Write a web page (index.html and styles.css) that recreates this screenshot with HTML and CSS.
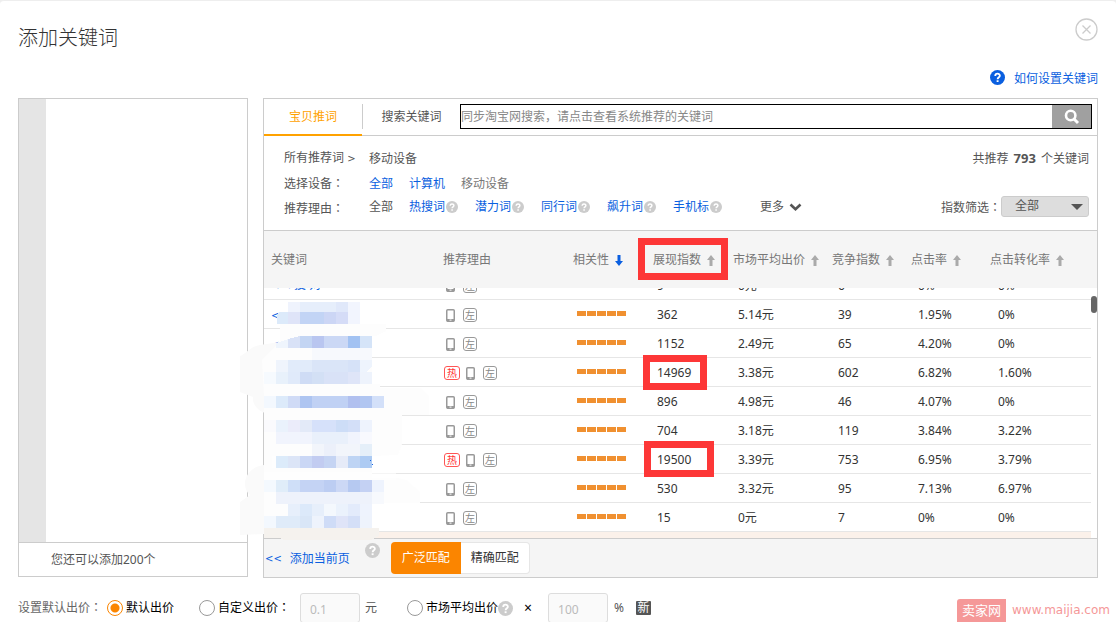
FILE: index.html
```html
<!DOCTYPE html>
<html lang="zh-CN">
<head>
<meta charset="utf-8">
<title>添加关键词</title>
<link rel="stylesheet" href="styles.css">
</head>
<body>
<svg class="defs" width="0" height="0" aria-hidden="true">
  <symbol id="help" viewBox="0 0 14 14"><circle cx="7" cy="7" r="7" fill="currentColor"/><path d="M4.9 5.5C4.9 2.7 9.2 2.8 9.2 5.3C9.2 6.8 7.1 6.8 7.1 8.6" fill="none" stroke="#fff" stroke-width="1.7"/><path d="M6.2 9.6h1.8v1.7H6.2z" fill="#fff"/></symbol>
  <symbol id="up" viewBox="0 0 8 11"><path d="M4 0L8 5H5.5V11H2.5V5H0z" fill="currentColor"/></symbol>
  <symbol id="down" viewBox="0 0 8 11"><path d="M4 11L8 6H5.5V0H2.5V6H0z" fill="currentColor"/></symbol>
  <symbol id="phone" viewBox="0 0 9 13"><rect x="0.75" y="0.75" width="7.5" height="11.5" rx="1" fill="none" stroke="#999" stroke-width="1.5"/><path d="M1 10h7v2.5H1z" fill="#999"/><path d="M3.5 10.6h2v1h-2z" fill="#fff"/></symbol>
</svg>
<main class="dialog">
  <header class="head">
    <h1 class="title">添加关键词</h1>
    <button class="close" type="button" aria-label="关闭"><svg width="23" height="23" viewBox="0 0 23 23"><circle cx="11.5" cy="11.5" r="10.5" fill="none" stroke="#ccc" stroke-width="1.3"/><path d="M7.5 7.5l8 8M15.5 7.5l-8 8" stroke="#ccc" stroke-width="1.3"/></svg></button>
  </header>
  <div class="guide"><a class="guide-link" href="#"><svg class="guide-icon"><use href="#help"/></svg>如何设置关键词</a></div>

  <div class="columns">
    <section class="picked">
      <div class="picked-list"><div class="gutter"></div></div>
      <div class="picked-foot">您还可以添加200个</div>
    </section>

    <section class="finder">
      <div class="tabs">
        <button class="tab tab-active" type="button">宝贝推词</button>
        <div class="tabs-rest">
          <button class="tab tab-search" type="button">搜索关键词</button>
          <form class="search">
            <input class="search-input" type="text" aria-label="搜索关键词" placeholder="同步淘宝网搜索，请点击查看系统推荐的关键词">
            <button class="search-btn" type="button" aria-label="搜索"><svg width="16" height="16" viewBox="0 0 16 16"><circle cx="6.7" cy="6.5" r="4.7" fill="none" stroke="#fff" stroke-width="2.6"/><path d="M10 10l4 4" stroke="#fff" stroke-width="3"/></svg></button>
          </form>
        </div>
      </div>

      <div class="filters">
        <div class="filter-rows">
          <div class="filter"><span class="filter-name">所有推荐词 <span class="arrows">&gt;</span></span><span>移动设备</span></div>
          <div class="filter"><span class="filter-name">选择设备<span class="colon" lang="zh-TW">：</span></span><a class="opt-all" href="#">全部</a><a class="opt-pc" href="#">计算机</a><span class="muted">移动设备</span></div>
          <div class="filter"><span class="filter-name">推荐理由<span class="colon" lang="zh-TW">：</span></span>
            <div class="reasons"><span class="opt-all">全部</span>
            <span class="reason"><a href="#">热搜词</a><svg class="tip"><use href="#help"/></svg></span>
            <span class="reason"><a href="#">潜力词</a><svg class="tip"><use href="#help"/></svg></span>
            <span class="reason"><a href="#">同行词</a><svg class="tip"><use href="#help"/></svg></span>
            <span class="reason"><a href="#">飙升词</a><svg class="tip"><use href="#help"/></svg></span>
            <span class="reason"><a href="#">手机标</a><svg class="tip"><use href="#help"/></svg></span>
            <button class="more" type="button">更多<svg width="13" height="9" viewBox="0 0 13 9"><path d="M1.5 1.5L6.5 6.3L11.5 1.5" fill="none" stroke="#555" stroke-width="2.6"/></svg></button></div>
          </div>
        </div>
        <div class="filter-side">
          <div class="total">共推荐 <b>793</b> 个关键词</div>
          <div class="index"><label class="index-name" for="index">指数筛选<span class="colon" lang="zh-TW">：</span></label><span class="select-box"><select id="index" class="select"><option>全部</option></select></span></div>
        </div>
      </div>

      <table class="grid grid-head">
        <colgroup><col class="h1"><col class="h2"><col class="h3"><col class="h4"><col class="h5"><col class="h6"><col class="h7"><col></colgroup>
        <thead><tr>
          <th>关键词</th><th>推荐理由</th>
          <th>相关性<svg class="sort sort-on"><use href="#down"/></svg></th>
          <th>展现指数<svg class="sort"><use href="#up"/></svg></th>
          <th>市场平均出价<svg class="sort"><use href="#up"/></svg></th>
          <th>竞争指数<svg class="sort"><use href="#up"/></svg></th>
          <th>点击率<svg class="sort"><use href="#up"/></svg></th>
          <th>点击转化率<svg class="sort"><use href="#up"/></svg></th>
        </tr></thead>
      </table>

      <div class="scroller">
        <table class="grid grid-body">
          <colgroup><col class="b1"><col class="b2"><col class="b3"><col class="b4"><col class="b5"><col class="b6"><col class="b7"><col></colgroup>
          <tbody>
            <tr><td><a href="#"><span class="arrows">&lt; &lt;</span> 投 对</a></td><td><div class="tags"><svg class="phone"><use href="#phone"/></svg><i class="tag">左</i></div></td><td></td><td>9</td><td>0元</td><td>6</td><td>0%</td><td>0%</td></tr>
            <tr><td><a class="arrows" href="#">&lt;</a></td><td><div class="tags"><svg class="phone"><use href="#phone"/></svg><i class="tag">左</i></div></td><td><div class="bars"></div></td><td>362</td><td>5.14元</td><td>39</td><td>1.95%</td><td>0%</td></tr>
            <tr><td><a class="arrows" href="#">&lt;</a></td><td><div class="tags"><svg class="phone"><use href="#phone"/></svg><i class="tag">左</i></div></td><td><div class="bars"></div></td><td>1152</td><td>2.49元</td><td>65</td><td>4.20%</td><td>0%</td></tr>
            <tr><td></td><td><div class="tags"><i class="tag tag-hot">热</i><svg class="phone"><use href="#phone"/></svg><i class="tag">左</i></div></td><td><div class="bars"></div></td><td>14969</td><td>3.38元</td><td>602</td><td>6.82%</td><td>1.60%</td></tr>
            <tr><td></td><td><div class="tags"><svg class="phone"><use href="#phone"/></svg><i class="tag">左</i></div></td><td><div class="bars"></div></td><td>896</td><td>4.98元</td><td>46</td><td>4.07%</td><td>0%</td></tr>
            <tr><td></td><td><div class="tags"><svg class="phone"><use href="#phone"/></svg><i class="tag">左</i></div></td><td><div class="bars"></div></td><td>704</td><td>3.18元</td><td>119</td><td>3.84%</td><td>3.22%</td></tr>
            <tr><td></td><td><div class="tags"><i class="tag tag-hot">热</i><svg class="phone"><use href="#phone"/></svg><i class="tag">左</i></div></td><td><div class="bars"></div></td><td>19500</td><td>3.39元</td><td>753</td><td>6.95%</td><td>3.79%</td></tr>
            <tr><td></td><td><div class="tags"><svg class="phone"><use href="#phone"/></svg><i class="tag">左</i></div></td><td><div class="bars"></div></td><td>530</td><td>3.32元</td><td>95</td><td>7.13%</td><td>6.97%</td></tr>
            <tr><td></td><td><div class="tags"><svg class="phone"><use href="#phone"/></svg><i class="tag">左</i></div></td><td><div class="bars"></div></td><td>15</td><td>0元</td><td>7</td><td>0%</td><td>0%</td></tr>
          </tbody>
        </table>
        <div class="next-row"></div>
        <div class="thumb"></div>
      </div>

      <div class="finder-foot">
        <a class="add-page" href="#"><span class="arrows">&lt;&lt;</span><span>添加当前页</span></a>
        <svg class="foot-tip"><use href="#help"/></svg>
        <div class="match"><button class="match-btn match-on" type="button">广泛匹配</button><button class="match-btn" type="button">精确匹配</button></div>
      </div>

      <svg class="mosaic" viewBox="240 300 200 240" aria-hidden="true">
        <path fill="#fafafa" d="M240 356C246 354 251 346 260 345L280 342L300 336H372V414H268C258 412 252 404 253 397L240 392z"/>
        <path fill="#fafafa" d="M264 466H372V538H282L264 534L240 535V502L250 495C240 487 245 467 264 465z"/>
        <path fill="#fdfdfd" d="M280 324H386V331L376 336H372V384H380V388H420L429 396V415H402V444L398 455L372 456V478H398L406 480L420 492V503H372V538H264V416L276 444H264V396L262 360L280 342z"/>
        <path fill="#fff" d="M264 472h132v8H264zM272 456h100v12H272z" opacity=".6"/>
        <g shape-rendering="crispEdges">
          <g transform="translate(0 302)"><path fill="#eff3fd" d="M288 0h12v10h-12z"/><path fill="#e6eefb" d="M300 0h36v10h-36z"/><path fill="#e0e8fa" d="M336 0h12v10h-12z"/><path fill="#f2f5fe" d="M348 0h12v22h-12z"/></g>
          <g transform="translate(0 312)"><path fill="#dceafa" d="M279 0h9v12h-11v-8z"/><path fill="#dfe4f8" d="M288 0h12v12h-12z"/><path fill="#c2d4f5" d="M300 0h24v12h-24z"/><path fill="#ccd6f5" d="M324 0h12v12h-12z"/><path fill="#d5dcf7" d="M336 0h12v12h-12z"/></g>
          <g transform="translate(0 336)"><path fill="#eff5fd" d="M276 7l12-4v9h-12z"/><path fill="#d9e2f7" d="M288 3l12-3v12h-12z"/><path fill="#c3d5f3" d="M300 0h12v12h-12z"/><path fill="#b9c6f0" d="M312 0h12v12h-12z"/><path fill="#cbd8f5" d="M324 0h24v12h-24z"/><path fill="#a2c2f2" d="M348 0h12v12h-12z"/><path fill="#d5e4f8" d="M360 0h12v12h-12z"/><path fill="#f7f9fd" d="M312 12h60v12h-60z"/></g>
          <g transform="translate(0 360)"><path fill="#eff4fc" d="M276 0h12v12h-12z"/><path fill="#e1ebfa" d="M288 0h24v12h-24z"/><path fill="#dae5f8" d="M312 0h36v12h-36z"/><path fill="#d6e2f8" d="M348 0h12v12h-12z"/><path fill="#eef4fd" d="M360 0h12v6l-6 6h-6z"/></g>
          <g transform="translate(0 372)"><path fill="#f6fafe" d="M264 0h12v12h-12z"/><path fill="#e8f1fb" d="M276 0h12v12h-12z"/><path fill="#e0eafa" d="M288 0h12v12h-12z"/><path fill="#cfdcf5" d="M300 0h12v12h-12z"/><path fill="#d3e0f5" d="M312 0h12v12h-12z"/><path fill="#d9e2f7" d="M324 0h24v12h-24z"/><path fill="#dfe5f8" d="M348 0h12v12h-12z"/><path fill="#eef3fc" d="M360 0h12v12h-12z"/></g>
          <g transform="translate(0 396)"><path fill="#f3f8fe" d="M264 0h12v12h-12z"/><path fill="#dceafa" d="M276 0h12v12h-12z"/><path fill="#d0dbf6" d="M288 0h12v12h-12z"/><path fill="#aec5f1" d="M300 0h12v12h-12z"/><path fill="#c0d1f4" d="M312 0h36v12h-36z"/><path fill="#b1c0ef" d="M348 0h12v12h-12z"/><path fill="#b1c6f1" d="M360 0h12v12h-12z"/><path fill="#d3e0f9" d="M372 0h12v12h-12z"/></g>
          <g transform="translate(0 420)"><path fill="#fafafd" d="M264 0h12v12h-12z"/><path fill="#eaf2fc" d="M276 0h12v12h-12z"/><path fill="#ebecfa" d="M288 0h12v12h-12z"/><path fill="#e3eaf8" d="M300 0h12v12h-12z"/><path fill="#d6e1fa" d="M312 0h24v12h-24z"/><path fill="#cdddf7" d="M336 0h12v12h-12z"/><path fill="#d3dff8" d="M348 0h12v12h-12z"/><path fill="#eef3fd" d="M360 0h12v12h-12z"/></g>
          <g transform="translate(0 432)"><path fill="#f1f4fd" d="M276 0h36v12h-36zM348 0h12v12h-12z"/><path fill="#e9f0fb" d="M312 0h36v12h-36z"/><path fill="#f8f9fe" d="M360 0h12v12h-12z"/><path fill="#f2f5fb" d="M312 12h12v12h-12zM336 12h24v12h-24z"/><path fill="#ecf0fa" d="M324 12h12v12h-12z"/><path fill="#e5eff9" d="M360 12h12v12h-12z"/></g>
          <g transform="translate(0 456)"><path fill="#dcebfa" d="M276 0h12v12h-12z"/><path fill="#dce5f7" d="M288 0h12v12h-12z"/><path fill="#cad7f5" d="M300 0h12v12h-12z"/><path fill="#c2ccf1" d="M312 0h12v12h-12z"/><path fill="#c5d4f3" d="M324 0h12v12h-12z"/><path fill="#e6ebf8" d="M336 0h12v12h-12z"/><path fill="#bed4f4" d="M348 0h12v12h-12z"/><path fill="#adcbf3" d="M360 0h12v12h-12z"/><path fill="#1464e6" d="M370 4h1v1h-1zM372 8h1v1h-1z"/></g>
          <g transform="translate(0 480)"><path fill="#f4f9fe" d="M264 0h12v12h-12z"/><path fill="#e0edf9" d="M276 0h12v12h-12z"/><path fill="#cfdff8" d="M288 0h12v12h-12z"/><path fill="#c4d3f4" d="M300 0h24v12h-24z"/><path fill="#bccdf2" d="M324 0h12v12h-12z"/><path fill="#ccd8f5" d="M336 0h12v12h-12z"/><path fill="#b6c9f1" d="M348 0h12v12h-12z"/><path fill="#c4d1f3" d="M360 0h12v12h-12z"/><path fill="#eef3fd" d="M372 0h12v12h-12z"/><path fill="#eef2fb" d="M276 12h96v12h-96z"/><path fill="#f7f9fd" d="M372 12h12v12h-12z"/></g>
          <g transform="translate(0 504)"><path fill="#e7effb" d="M288 0h12v12h-12zM312 0h12v12h-12z"/><path fill="#dce9fa" d="M300 0h12v12h-12z"/><path fill="#f4f8fd" d="M324 0h12v12h-12z"/><path fill="#ebf2fc" d="M336 0h12v12h-12z"/><path fill="#e3ebfb" d="M348 0h12v12h-12z"/><path fill="#eef3fd" d="M360 0h12v12h-12z"/></g>
          <g transform="translate(0 516)"><path fill="#f3f8fe" d="M264 0h12v12h-12z"/><path fill="#dfebf9" d="M276 0h24v12h-24z"/><path fill="#d9e6f7" d="M300 0h12v12h-12z"/><path fill="#eef3fc" d="M312 0h12v12h-12zM360 0h12v12h-12z"/><path fill="#cfdcf7" d="M324 0h12v12h-12z"/><path fill="#dfe4f8" d="M336 0h12v12h-12z"/><path fill="#d4dff7" d="M348 0h12v12h-12z"/></g>
          <path fill="#f5f2ee" d="M264 528h115v8l-8 4H284l-4-2h-16z"/>
        </g>
      </svg>
      <div class="mark mark-head"></div>
      <div class="mark mark-first"></div>
      <div class="mark mark-second"></div>
    </section>
  </div>

  <form class="bid">
    <span class="bid-name">设置默认出价<span class="colon" lang="zh-TW">：</span></span>
    <label class="choice choice-default"><input class="radio" type="radio" name="bid" checked>默认出价</label>
    <label class="choice choice-custom"><input class="radio" type="radio" name="bid"><span>自定义出价<span class="colon" lang="zh-TW">：</span></span></label>
    <input class="amount" type="text" value="0.1" aria-label="自定义出价">
    <span class="unit-yuan">元</span>
    <label class="choice"><input class="radio" type="radio" name="bid">市场平均出价</label>
    <svg class="bid-tip"><use href="#help"/></svg>
    <span class="times">×</span>
    <input class="amount" type="text" value="100" aria-label="市场平均出价百分比">
    <span class="percent">%</span>
    <span class="new">新</span>
  </form>
  <div class="brand"><span class="brand-badge">卖家网</span><span class="brand-url">www.maijia.com</span></div>
</main>
</body>
</html>
```
FILE: styles.css
```css
* { box-sizing: border-box; }
body { margin: 0; background: #eee; color: #555; font: 12px/18px "Noto Sans", "Noto Sans CJK SC", sans-serif; }
button, input, select { font: inherit; color: inherit; }
button { padding: 0; border: 0; background: none; }
a { color: #0a5fe0; text-decoration: none; }
svg { display: block; flex: none; }
.defs { position: absolute; }
.arrows { font-family: "DejaVu Sans", sans-serif; font-size: 10px; }
.colon { font-family: "Noto Sans CJK TC", sans-serif; line-height: 1; }

.dialog { position: relative; height: 100vh; overflow: hidden; padding: 0 18px; border-top: 1px solid #eee; border-radius: 4px 4px 0 0; background: #fff; }
.head { display: flex; justify-content: space-between; align-items: flex-start; height: 69px; padding-top: 17px; }
.title { margin: 5px 0 0; color: #333; font-size: 20px; line-height: 30px; font-weight: 300; }
.close { height: 23px; }
.guide { display: flex; justify-content: flex-end; height: 28px; }
.guide-link { display: flex; gap: 9px; height: 18px; }
.guide-icon { width: 15px; height: 15px; }

.columns { display: flex; align-items: flex-start; gap: 15px; }
.picked { display: flex; flex-direction: column; flex: none; width: 230px; height: 479px; border: 1px solid #ccc; }
.picked-list { display: flex; flex: 1; }
.gutter { width: 27px; background: #e5e5e5; }
.picked-foot { height: 34px; padding: 8px 32px; border-top: 1px solid #ccc; }

.finder { position: relative; flex: 1; border: 1px solid #ccc; }
.tabs { display: flex; height: 37px; }
.tab { flex: none; height: 37px; }
.tab-active { width: 98px; border-bottom: 2px solid #ffa200; color: #ffa200; }
.tabs-rest { display: flex; flex: 1; align-items: flex-start; padding-top: 5px; border-bottom: 1px solid #ccc; }
.tab-search { width: 98px; height: 25px; border-left: 1px solid #ccc; }
.search { display: flex; flex: 1; height: 25px; margin-right: 5px; border: 1px solid #000; }
.search-input { flex: 1; min-width: 0; padding: 0; border: 0; outline: 0; }
.search-input::placeholder { color: #888; opacity: 1; }
.search-btn { display: flex; align-items: center; justify-content: center; width: 39px; background: #a0a0a0; }

.filters { display: flex; justify-content: space-between; height: 94px; padding: 10px 8px 0 20px; }
.filter { display: flex; align-items: center; height: 25px; white-space: nowrap; }
.filter-name { width: 85px; }
.opt-all { width: 40px; }
.opt-pc { width: 52px; }
.muted { color: #777; }
.reasons { display: flex; align-items: center; padding-bottom: 3px; }
.reason { display: flex; align-items: center; width: 66px; }
.tip { width: 12px; height: 12px; margin-left: 1px; color: #ccc; }
.more { display: flex; align-items: center; gap: 5px; margin-left: 21px; }
.filter-side { display: flex; flex-direction: column; justify-content: space-between; align-items: flex-end; padding: 3px 0 13px; }
.total b { margin: 0 2px; font-size: 13px; }
.index { display: flex; align-items: center; height: 22px; }
.index-name { padding-top: 3px; }
.select-box { position: relative; display: flex; }
.select-box::after { content: ""; position: absolute; right: 6px; top: 8px; border: 6px solid transparent; border-top-color: #555; border-bottom: 0; pointer-events: none; }
.select { width: 88px; height: 21px; padding: 0 13px; border: 1px solid #ccc; border-radius: 3px; background: #ddd; appearance: none; }

.grid { width: 100%; table-layout: fixed; border-collapse: collapse; }
.grid-head { height: 58px; border-top: 1px solid #ccc; background: #f5f5f5; color: #777; }
.grid-head th { padding: 0 0 0 7px; font-weight: 400; text-align: left; white-space: nowrap; }
.h1, .b1 { width: 172px; }
.h2, .b2 { width: 130px; }
.h3, .h4 { width: 80px; }
.h5 { width: 99px; }
.h6, .h7 { width: 79px; }
.b3 { width: 80px; }
.b4 { width: 81px; }
.b5 { width: 100px; }
.b6, .b7 { width: 80px; }
.sort { display: inline-block; width: 8px; height: 11px; margin-left: 6px; vertical-align: -2px; color: #aaa; }
.sort-on { color: #0a5fe0; }

.scroller { position: relative; display: flex; flex-direction: column; justify-content: flex-end; height: 250px; padding-right: 6px; overflow: hidden; }
.grid-body { flex: none; color: #333; }
.grid-body td { height: 29px; padding: 2px 0 0 11px; border-bottom: 1px solid #e6e6e6; }
.grid-body td:first-child { padding-left: 7px; }
.grid-body td:nth-child(2) { padding-left: 8px; }
.tags { display: flex; align-items: center; }
.phone { width: 9px; height: 13px; margin: 0 8px 0 2px; }
.tag { width: 14px; height: 14px; border: 1px solid #999; border-radius: 3px; color: #888; font-size: 10px; line-height: 12px; text-align: center; font-style: normal; }
.tag-hot { width: 16px; margin-right: 4px; border-color: #f55; color: #f33; }
.bars { width: 50px; height: 5px; margin-bottom: 4px; background: repeating-linear-gradient(90deg, #f09030 0 9px, #fff 9px 10px); }
.next-row { flex: none; height: 6px; background: #fbf1ea; }
.thumb { position: absolute; right: 0; top: 8px; width: 6px; height: 17px; border-radius: 3px; background: #666; }

.finder-foot { display: flex; align-items: center; height: 39px; border-top: 1px solid #ccc; background: #f5f5f5; }
.add-page { display: flex; gap: 8px; margin: 2px 15px 0 1px; }
.foot-tip { width: 15px; height: 15px; margin-bottom: 16px; color: #ccc; }
.match { display: flex; height: 32px; margin-left: 11px; }
.match-btn { width: 69px; border: 1px solid #e6e6e6; border-left: 0; border-radius: 0 4px 4px 0; background: #fff; color: #333; }
.match-on { width: 70px; border: 0; border-radius: 4px 0 0 4px; background: #fb8500; color: #fff; }

.mosaic { position: absolute; left: -24px; top: 201px; width: 200px; height: 240px; pointer-events: none; }
.mark { position: absolute; border: 7px solid #fd3737; pointer-events: none; }
.mark-head { left: 374px; top: 139px; width: 90px; height: 42px; }
.mark-first { left: 379px; top: 256px; width: 64px; height: 35px; }
.mark-second { left: 380px; top: 342px; width: 70px; height: 36px; }

.bid { display: flex; align-items: center; height: 60px; white-space: nowrap; }
.bid-name { width: 89px; color: #666; }
.choice { display: flex; align-items: center; gap: 3px; color: #000; }
.choice-default { width: 92px; }
.choice-custom { width: 101px; }
.radio { flex: none; width: 16px; height: 16px; margin: 0; border: 1px solid #999; border-radius: 50%; background: #fff; appearance: none; }
.radio:checked { border-color: #fb8500; background: radial-gradient(#fb8500 0 4px, #fff 5px); }
.amount { width: 60px; height: 30px; padding: 2px 9px 0; border: 1px solid #ddd; border-radius: 3px; background: #fafafa; color: #bbb; outline: 0; }
.unit-yuan { width: 42px; margin-left: 5px; }
.bid-tip { width: 15px; height: 15px; color: #ccc; }
.times { width: 35px; padding-left: 11px; color: #000; font-size: 14px; }
.percent { width: 28px; padding-left: 6px; }
.new { width: 15px; height: 14px; border-radius: 1px; background: #555; color: #fff; line-height: 14px; text-align: center; }

.brand { position: absolute; right: 6px; bottom: 0; display: flex; align-items: center; gap: 6px; color: #f59898; line-height: 23px; }
.brand-badge { padding: 0 5px; border-radius: 3px 0 0 0; background: #f59898; color: #fff; font-size: 13px; }
.brand-url { font-family: "DejaVu Sans", sans-serif; }
```
